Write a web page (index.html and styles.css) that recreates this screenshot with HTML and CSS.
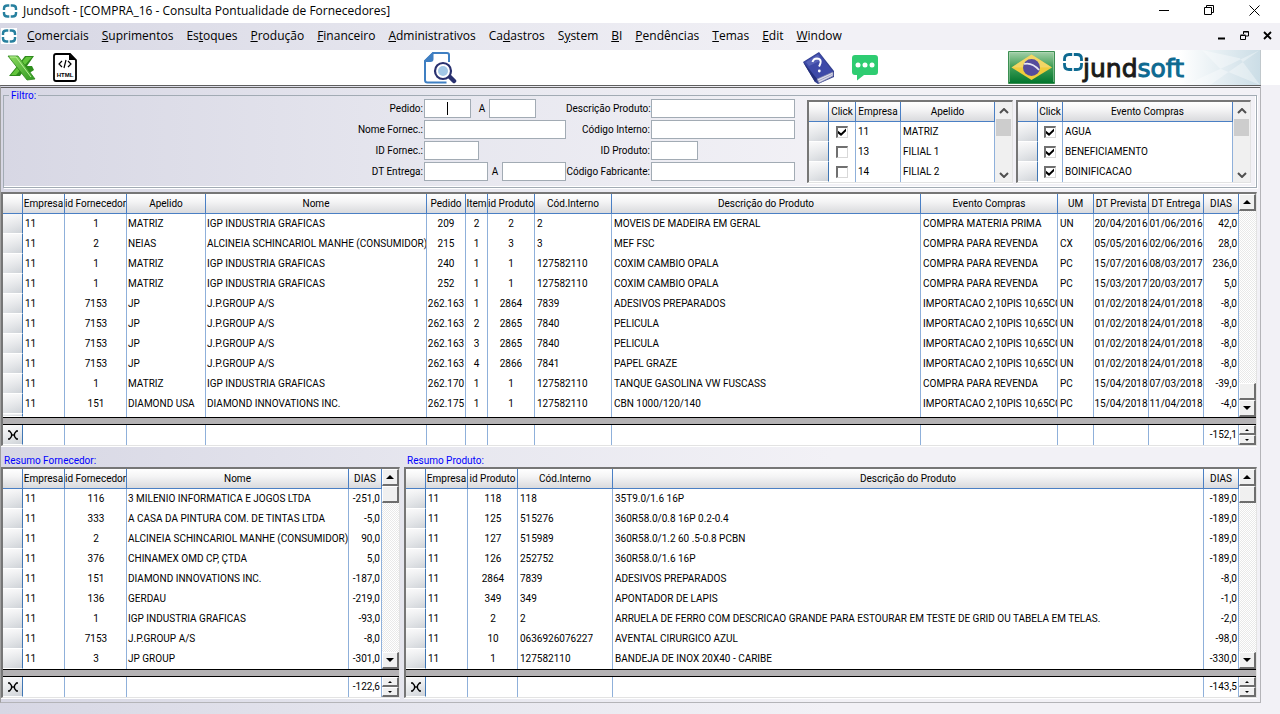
FILE: index.html
```html
<!DOCTYPE html>
<html lang="pt-BR">
<head>
<meta charset="utf-8">
<title>Jundsoft - [COMPRA_16 - Consulta Pontualidade de Fornecedores]</title>
<link rel="stylesheet" href="styles.css">
</head>
<body>
<svg class="defs" aria-hidden="true">
  <symbol id="brand" viewBox="0 0 16 16"><path d="M7.300 2.500H5.500Q2 2.500 2 5.500V7M8.700 2.500h1.800Q14 2.500 14 5.500V7M2 9v1.500q0 3 3.500 3H7.300M14 9v1.500q0 3-3.500 3H8.700" fill="none" stroke="#27809f" stroke-width="2.400"/></symbol>
  <symbol id="up" viewBox="0 0 8 4"><path d="M4 0L8 4H0z"/></symbol>
  <symbol id="down" viewBox="0 0 8 4"><path d="M0 0H8L4 4z"/></symbol>
  <symbol id="chev-up" viewBox="0 0 10 6"><path d="M1 5L5 1L9 5" fill="none" stroke="#505050" stroke-width="2"/></symbol>
  <symbol id="chev-down" viewBox="0 0 10 6"><path d="M1 1L5 5L9 1" fill="none" stroke="#505050" stroke-width="2"/></symbol>
  <symbol id="sum" viewBox="0 0 10 10"><path d="M0 1H1.500L3.500 3.500V6.500L1.500 9H0M10 1H8.500L6.500 3.500V6.500L8.500 9H10M3 5H7" fill="none" stroke="#000" stroke-width="1.300"/></symbol>
</svg>

<header class="titlebar">
  <svg class="brand"><use href="#brand"/></svg>
  <h1>Jundsoft - [COMPRA_16 - Consulta Pontualidade de Fornecedores]</h1>
  <div class="window-buttons">
    <button aria-label="Minimizar"><svg width="11" height="11"><path d="M0 5.500H10" stroke="#000" fill="none"/></svg></button>
    <button aria-label="Restaurar"><svg width="11" height="11"><path d="M.5 2.500h7v7h-7zM2.500 2.500v-2h7v7h-2" stroke="#000" fill="none"/></svg></button>
    <button aria-label="Fechar"><svg width="11" height="11"><path d="M.5.5l10 10M10.500.5l-10 10" stroke="#000" fill="none"/></svg></button>
  </div>
</header>

<nav class="menubar">
  <svg class="brand boxed"><use href="#brand"/></svg>
  <button><u>C</u>omerciais</button><button><u>S</u>uprimentos</button><button>Es<u>t</u>oques</button><button><u>P</u>rodução</button><button><u>F</u>inanceiro</button><button><u>A</u>dministrativos</button><button>Ca<u>d</u>astros</button><button>S<u>y</u>stem</button><button><u>B</u>I</button><button><u>P</u>endências</button><button><u>T</u>emas</button><button><u>E</u>dit</button><button><u>W</u>indow</button>
  <div class="child-buttons">
    <button aria-label="Minimizar janela"><svg width="9" height="9"><path d="M1 7.500H8" stroke="#000" stroke-width="2"/></svg></button>
    <button aria-label="Restaurar janela"><svg width="9" height="9"><path d="M.5 4.500h5v4h-5zM.5 4h5M3.500 3V.5h5v4.500H6M3.500 1h5" stroke="#000" fill="none"/></svg></button>
    <button aria-label="Fechar janela"><svg width="9" height="9"><path d="M1 1l7 7M8 1l-7 7" stroke="#000" stroke-width="1.800"/></svg></button>
  </div>
</nav>

<div class="toolbar">
  <div class="tools start">
    <button aria-label="Exportar Excel"><svg width="30" height="28" viewBox="0 0 30 28">
      <defs><linearGradient id="xl" x1="0" y1="0" x2="1" y2="1"><stop offset="0" stop-color="#8edb62"/><stop offset="1" stop-color="#2f9a20"/></linearGradient></defs>
      <path d="M18 2h9L13 22H2L11 11z" fill="#2f8a1c"/><path d="M19 3h6L9 21H4z" fill="#63c53c"/><path d="M16 12h9l2 4-6 4z" fill="#2f8f1d"/>
      <path d="M1 2h10L28 25l-8 1z" fill="url(#xl)" stroke="#2c8519" stroke-width=".8"/><path d="M3 3h6L24 23" stroke="#baf096" fill="none"/></svg></button>
    <button aria-label="Exportar HTML"><svg width="24" height="29" viewBox="0 0 24 29">
      <path d="M3 1H17L23 7V26q0 2-2 2H3q-2 0-2-2V3q0-2 2-2z" fill="#fff" stroke="#000" stroke-width="1.800"/><path d="M16 1v6h7z"/>
      <path d="M9 8L6 11l3 3M15 8l3 3-3 3M13 7l-2 8" fill="none" stroke="#000" stroke-width="1.200"/>
      <text x="12" y="24" class="html-label">HTML</text></svg></button>
  </div>
  <span class="space wide"></span>
  <button aria-label="Pesquisar"><svg width="34" height="34" viewBox="0 0 34 34">
    <path d="M26 11V4q0-2-2-2H10L2 10V29q0 2.500 2.500 2.500H23.500" fill="none" stroke="#3f7fc2" stroke-width="2"/><path d="M10.500 1V8q0 3-3 3H1V10L10 1z" fill="#3f7fc2"/>
    <path d="M26 25l5 5" stroke="#29316f" stroke-width="4.500" stroke-linecap="round"/><circle cx="20" cy="20" r="8" fill="#fff" stroke="#29316f" stroke-width="2.200"/><circle cx="20" cy="20" r="5" fill="#a3c8e6"/></svg></button>
  <span class="space wide"></span>
  <div class="tools help">
    <button aria-label="Ajuda"><svg width="33" height="34" viewBox="0 0 33 34">
      <path d="M1 11L17 1L32 20V26L16 33L13 31z" fill="#33408f"/><path d="M2 11L17 2L31 21L15 28z" fill="#3e4aa8"/><path d="M4 11L16 3.500L20 9L7 15z" fill="#6975c2" opacity=".6"/>
      <path d="M15 28L31 21V25L17 32z" fill="#dcdcec" stroke="#7b7fa8" stroke-width=".7"/><path d="M16 30L30 23.500" stroke="#8f90b5" stroke-width=".7"/><path d="M1 11L13 31L15 28z" fill="#242f7c"/>
      <path d="M10.500 11q1-3.500 4.500-3.500 4.500.5 3.500 4.500-.8 2.500-1.500 3.500" fill="none" stroke="#fff" stroke-width="2"/><circle cx="17.300" cy="20" r="1.400" fill="#fff"/></svg></button>
    <button aria-label="Mensagens"><svg width="26" height="26" viewBox="0 0 26 26"><path d="M3 0H23q3 0 3 3V17q0 3-3 3H12L5 25.500V20H3q-3 0-3-3V3Q0 0 3 0z" fill="#2ecc71"/><g fill="#fff"><circle cx="6" cy="10" r="2.500"/><circle cx="13" cy="10" r="2.500"/><circle cx="20" cy="10" r="2.500"/></g></svg></button>
  </div>
  <span class="space narrow"></span>
  <button aria-label="Idioma: Português (Brasil)"><svg width="47" height="33" viewBox="0 0 47 33">
    <defs><linearGradient id="fl" x1="0" y1="0" x2="0" y2="1"><stop offset="0" stop-color="#a6d1ab"/><stop offset=".45" stop-color="#45a15a"/><stop offset="1" stop-color="#00742c"/></linearGradient></defs>
    <path d="M.5.5h46v32h-46z" fill="url(#fl)" stroke="#3c8f52"/><path d="M1.500 31V1.500H45.500V31" fill="none" stroke="#b9dcbd" opacity=".5"/><path d="M23.500 3.500L44 16.500L23.500 29L3.500 16.500z" fill="#f0cc3c"/><path d="M23.500 3.500L44 16.500H3.500z" fill="#f3dc80" opacity=".6"/><circle cx="23.500" cy="16.500" r="8.500" fill="#554c9c"/><path d="M16 13q8-2 15 6" stroke="#e8e8f4" stroke-width="1.600" fill="none"/></svg></button>
  <div class="banner">
    <svg width="20" height="18" viewBox="0 0 20 18"><path d="M9.200 1.500H6Q1.500 1.500 1.500 6V8M10.800 1.500H14Q18.500 1.500 18.500 6V8M1.500 10v2q0 4.500 4.500 4.500H9.200M18.500 10v2q0 4.500-4.500 4.500H10.800" fill="none" stroke="#0e6a91" stroke-width="2.800"/></svg>
    <span class="wordmark">jund<b>soft</b></span>
    <svg class="facets" viewBox="0 0 80 34" preserveAspectRatio="none"><defs><linearGradient id="bn"><stop offset="0" stop-color="#fff"/><stop offset="1" stop-color="#cbdde6"/></linearGradient></defs><path d="M0 0h80v34H0z" fill="url(#bn)"/><path d="M80 0L30 34H5L50 14zM22 0L40 18 80 34 60 8z" fill="#fff" opacity=".35"/></svg>
  </div>
</div>

<main class="panel">
  <fieldset class="filter">
    <legend>Filtro:</legend>
    <div class="filter-body">
      <div class="form">
        <div class="line"><label for="pedido">Pedido:</label><input id="pedido" class="w47 current"><label class="to" for="pedido-a">A</label><input id="pedido-a" class="w47"></div>
        <div class="line"><label for="nome">Nome Fornec.:</label><input id="nome" class="grow"></div>
        <div class="line"><label for="idf">ID Fornec.:</label><input id="idf" class="w55"></div>
        <div class="line"><label for="dt">DT Entrega:</label><input id="dt" class="w64"><label class="to tight" for="dt-a">A</label><input id="dt-a" class="w64"></div>
      </div>
      <div class="form second">
        <div class="line"><label for="desc">Descrição Produto:</label><input id="desc" class="grow"></div>
        <div class="line"><label for="cod">Código Interno:</label><input id="cod" class="grow"></div>
        <div class="line"><label for="idp">ID Produto:</label><input id="idp" class="w47"></div>
        <div class="line"><label for="fab">Código Fabricante:</label><input id="fab" class="grow"></div>
      </div>
      <div class="frame pick companies">
        <table class="data">
          <colgroup><col class="c20"><col class="c27"><col class="c45"><col></colgroup>
          <thead><tr><th><th>Click<th>Empresa<th>Apelido</thead>
          <tbody>
          <tr><td><td class="mid"><input type="checkbox" aria-label="MATRIZ" checked><td>11<td>MATRIZ
          <tr><td><td class="mid"><input type="checkbox" aria-label="FILIAL 1"><td>13<td>FILIAL 1
          <tr><td><td class="mid"><input type="checkbox" aria-label="FILIAL 2"><td>14<td>FILIAL 2
          </tbody>
        </table>
        <div class="flatbar"><svg><use href="#chev-up"/></svg><i></i><svg><use href="#chev-down"/></svg></div>
      </div>
      <div class="frame pick events">
        <table class="data">
          <colgroup><col class="c20"><col class="c25"><col></colgroup>
          <thead><tr><th><th>Click<th>Evento Compras</thead>
          <tbody>
          <tr><td><td class="mid"><input type="checkbox" aria-label="AGUA" checked><td>AGUA
          <tr><td><td class="mid"><input type="checkbox" aria-label="BENEFICIAMENTO" checked><td>BENEFICIAMENTO
          <tr><td><td class="mid"><input type="checkbox" aria-label="BOINIFICACAO" checked><td>BOINIFICACAO
          </tbody>
        </table>
        <div class="flatbar"><svg><use href="#chev-up"/></svg><i></i><svg><use href="#chev-down"/></svg></div>
      </div>
    </div>
  </fieldset>

  <section class="frame">
    <div class="rows">
      <table class="data orders">
        <colgroup><col class="c20"><col class="c42"><col class="c62"><col class="c79"><col class="c221"><col class="c39"><col class="c22"><col class="c47"><col class="c77"><col><col class="c137"><col class="c36"><col class="c55"><col class="c55"><col class="c35"></colgroup>
        <thead><tr><th><th>Empresa<th>id Fornecedor<th>Apelido<th>Nome<th>Pedido<th>Item<th>id Produto<th>Cód.Interno<th>Descrição do Produto<th>Evento Compras<th>UM<th>DT Prevista<th>DT Entrega<th>DIAS</thead>
        <tbody>
        <tr><td><td>11<td>1<td>MATRIZ<td>IGP INDUSTRIA GRAFICAS<td>209<td>2<td>2<td>2<td>MOVEIS DE MADEIRA EM GERAL<td>COMPRA MATERIA PRIMA<td>UN<td>20/04/2016<td>01/06/2016<td>42,0
        <tr><td><td>11<td>2<td>NEIAS<td>ALCINEIA SCHINCARIOL MANHE (CONSUMIDOR)<td>215<td>1<td>3<td>3<td>MEF FSC<td>COMPRA PARA REVENDA<td>CX<td>05/05/2016<td>02/06/2016<td>28,0
        <tr><td><td>11<td>1<td>MATRIZ<td>IGP INDUSTRIA GRAFICAS<td>240<td>1<td>1<td>127582110<td>COXIM CAMBIO OPALA<td>COMPRA PARA REVENDA<td>PC<td>15/07/2016<td>08/03/2017<td>236,0
        <tr><td><td>11<td>1<td>MATRIZ<td>IGP INDUSTRIA GRAFICAS<td>252<td>1<td>1<td>127582110<td>COXIM CAMBIO OPALA<td>COMPRA PARA REVENDA<td>PC<td>15/03/2017<td>20/03/2017<td>5,0
        <tr><td><td>11<td>7153<td>JP<td>J.P.GROUP A/S<td>262.163<td>1<td>2864<td>7839<td>ADESIVOS PREPARADOS<td>IMPORTACAO 2,10PIS 10,65CO<td>UN<td>01/02/2018<td>24/01/2018<td>-8,0
        <tr><td><td>11<td>7153<td>JP<td>J.P.GROUP A/S<td>262.163<td>2<td>2865<td>7840<td>PELICULA<td>IMPORTACAO 2,10PIS 10,65CO<td>UN<td>01/02/2018<td>24/01/2018<td>-8,0
        <tr><td><td>11<td>7153<td>JP<td>J.P.GROUP A/S<td>262.163<td>3<td>2865<td>7840<td>PELICULA<td>IMPORTACAO 2,10PIS 10,65CO<td>UN<td>01/02/2018<td>24/01/2018<td>-8,0
        <tr><td><td>11<td>7153<td>JP<td>J.P.GROUP A/S<td>262.163<td>4<td>2866<td>7841<td>PAPEL GRAZE<td>IMPORTACAO 2,10PIS 10,65CO<td>UN<td>01/02/2018<td>24/01/2018<td>-8,0
        <tr><td><td>11<td>1<td>MATRIZ<td>IGP INDUSTRIA GRAFICAS<td>262.170<td>1<td>1<td>127582110<td>TANQUE GASOLINA VW FUSCASS<td>COMPRA PARA REVENDA<td>PC<td>15/04/2018<td>07/03/2018<td>-39,0
        <tr><td><td>11<td>151<td>DIAMOND USA<td>DIAMOND INNOVATIONS INC.<td>262.175<td>1<td>1<td>127582110<td>CBN 1000/120/140<td>IMPORTACAO 2,10PIS 10,65CO<td>PC<td>15/04/2018<td>11/04/2018<td>-4,0
        <tr class="filler"><td><td><td><td><td><td><td><td><td><td><td><td><td><td><td>
        </tbody>
      </table>
      <div class="scroll at-end"><button aria-label="Subir"><svg><use href="#up"/></svg></button><i></i><button aria-label="Descer"><svg><use href="#down"/></svg></button></div>
    </div>
    <div class="split"></div>
    <div class="rows">
      <table class="data totals">
        <colgroup><col class="c20"><col class="c42"><col class="c62"><col class="c79"><col class="c221"><col class="c39"><col class="c22"><col class="c47"><col class="c77"><col><col class="c137"><col class="c36"><col class="c55"><col class="c55"><col class="c35"></colgroup>
        <tbody><tr><td><svg class="sum"><use href="#sum"/></svg><td><td><td><td><td><td><td><td><td><td><td><td><td><td>-152,1</tbody>
      </table>
      <div class="spin"><button aria-label="Anterior"><svg><use href="#up"/></svg></button><button aria-label="Próximo"><svg><use href="#down"/></svg></button></div>
    </div>
  </section>

  <div class="summaries">
    <section>
      <h2>Resumo Fornecedor:</h2>
      <div class="frame">
        <div class="rows">
          <table class="data suppliers">
            <colgroup><col class="c20"><col class="c42"><col class="c62"><col><col class="c33"></colgroup>
            <thead><tr><th><th>Empresa<th>id Fornecedor<th>Nome<th>DIAS</thead>
            <tbody>
            <tr><td><td>11<td>116<td>3 MILENIO INFORMATICA E JOGOS LTDA<td>-251,0
            <tr><td><td>11<td>333<td>A CASA DA PINTURA COM. DE TINTAS LTDA<td>-5,0
            <tr><td><td>11<td>2<td>ALCINEIA SCHINCARIOL MANHE (CONSUMIDOR)<td>90,0
            <tr><td><td>11<td>376<td>CHINAMEX OMD CP, ÇTDA<td>5,0
            <tr><td><td>11<td>151<td>DIAMOND INNOVATIONS INC.<td>-187,0
            <tr><td><td>11<td>136<td>GERDAU<td>-219,0
            <tr><td><td>11<td>1<td>IGP INDUSTRIA GRAFICAS<td>-93,0
            <tr><td><td>11<td>7153<td>J.P.GROUP A/S<td>-8,0
            <tr><td><td>11<td>3<td>JP GROUP<td>-301,0
            </tbody>
          </table>
          <div class="scroll"><button aria-label="Subir"><svg><use href="#up"/></svg></button><i></i><button aria-label="Descer"><svg><use href="#down"/></svg></button></div>
        </div>
        <div class="split"></div>
        <div class="rows">
          <table class="data totals">
            <colgroup><col class="c20"><col class="c42"><col class="c62"><col><col class="c33"></colgroup>
            <tbody><tr><td><svg class="sum"><use href="#sum"/></svg><td><td><td><td>-122,6</tbody>
          </table>
          <div class="spin"><button aria-label="Anterior"><svg><use href="#up"/></svg></button><button aria-label="Próximo"><svg><use href="#down"/></svg></button></div>
        </div>
      </div>
    </section>
    <section>
      <h2>Resumo Produto:</h2>
      <div class="frame">
        <div class="rows">
          <table class="data products">
            <colgroup><col class="c20"><col class="c42"><col class="c50"><col class="c95"><col><col class="c35"></colgroup>
            <thead><tr><th><th>Empresa<th>id Produto<th>Cód.Interno<th>Descrição do Produto<th>DIAS</thead>
            <tbody>
            <tr><td><td>11<td>118<td>118<td>35T9.0/1.6 16P<td>-189,0
            <tr><td><td>11<td>125<td>515276<td>360R58.0/0.8 16P 0.2-0.4<td>-189,0
            <tr><td><td>11<td>127<td>515989<td>360R58.0/1.2 60 .5-0.8 PCBN<td>-189,0
            <tr><td><td>11<td>126<td>252752<td>360R58.0/1.6 16P<td>-189,0
            <tr><td><td>11<td>2864<td>7839<td>ADESIVOS PREPARADOS<td>-8,0
            <tr><td><td>11<td>349<td>349<td>APONTADOR DE LAPIS<td>-1,0
            <tr><td><td>11<td>2<td>2<td>ARRUELA DE FERRO COM DESCRICAO GRANDE PARA ESTOURAR EM TESTE DE GRID OU TABELA EM TELAS.<td>-2,0
            <tr><td><td>11<td>10<td>0636926076227<td>AVENTAL CIRURGICO AZUL<td>-98,0
            <tr><td><td>11<td>1<td>127582110<td>BANDEJA DE INOX 20X40 - CARIBE<td>-330,0
            </tbody>
          </table>
          <div class="scroll"><button aria-label="Subir"><svg><use href="#up"/></svg></button><i></i><button aria-label="Descer"><svg><use href="#down"/></svg></button></div>
        </div>
        <div class="split"></div>
        <div class="rows">
          <table class="data totals">
            <colgroup><col class="c20"><col class="c42"><col class="c50"><col class="c95"><col><col class="c35"></colgroup>
            <tbody><tr><td><svg class="sum"><use href="#sum"/></svg><td><td><td><td><td>-143,5</tbody>
          </table>
          <div class="spin"><button aria-label="Anterior"><svg><use href="#up"/></svg></button><button aria-label="Próximo"><svg><use href="#down"/></svg></button></div>
        </div>
      </div>
    </section>
  </div>
</main>
</body>
</html>
```

FILE: styles.css
```css
* { box-sizing: border-box; }
body {
  margin: 0;
  min-height: 100vh;
  color: #000;
  font: 10px/20px Roboto, "Liberation Sans", sans-serif;
  background: linear-gradient(90deg, #d7d7e4 0, #e7e7ef 35%, #f2f1f6 65%);
}
button { margin: 0; padding: 0; border: 0; background: none; font: inherit; color: inherit; }
svg { display: block; flex: none; }
.defs { position: absolute; width: 0; height: 0; }

.titlebar { display: flex; align-items: center; height: 23px; padding: 0 20px 2px 2px; background: #fff; }
.titlebar h1 { flex: 1; margin: 0 0 0 5px; font: 12px/20px "Open Sans", "Noto Sans", sans-serif; }
.brand { width: 16px; height: 16px; }
.brand.boxed { background: #fff; margin-right: -3px; }
.window-buttons { display: flex; gap: 34px; }

.menubar { display: flex; align-items: center; height: 27px; padding: 0 8px 2px 1px; gap: 13px; font: 12px/20px "Open Sans", "Noto Sans", sans-serif; }
.child-buttons { display: flex; gap: 14px; margin-left: auto; }

.toolbar { display: flex; align-items: center; height: 35px; padding-right: 19px; background: #fff; }
.tools { display: flex; align-items: center; }
.start { gap: 16px; padding-left: 7px; }
.help { gap: 17px; }
.space.wide { flex: 8; }
.space.narrow { flex: 3; }
.html-label { font: bold 6px "Liberation Sans", sans-serif; text-anchor: middle; }
.banner { display: flex; height: 35px; width: 206px; padding: 3px 0 0 8px; border-right: 1px solid #c0c8cc; position: relative; }
.wordmark { position: relative; z-index: 1; font: 25px/32px "DejaVu Sans", sans-serif; color: #1b1b1b; -webkit-text-stroke: 1px currentColor; }
.wordmark b { font-weight: normal; color: #0e6a91; }
.facets { position: absolute; right: 0; top: 0; width: 80px; height: 35px; }

.panel { margin-right: 19px; padding: 1px 3px 4px 0; border: 1px solid #b4b4b8; border-left-color: #a0a0a0; border-top: 3px double #5f5f5f; }

.filter { margin: 0 0 4px 2px; padding: 0; border: 1px solid #a2abb4; min-width: 0; box-shadow: inset -1px -1px #fff, 1px 1px #fff; }
.filter legend { height: 13px; margin-left: 5px; padding: 0 2px; line-height: 13px; color: #00f; }
.filter-body { display: flex; justify-content: flex-end; padding: 0 5px 4px 0; margin-top: -3px; }
.form { display: flex; flex-direction: column; gap: 2px; width: 223px; }
.form.second { width: 229px; margin-right: 12px; }
.line { display: flex; align-items: center; height: 19px; }
.line label { width: 81px; padding-right: 1px; text-align: right; white-space: nowrap; }
.second .line label { width: 85px; }
.line .to { width: 18px; padding: 0; text-align: center; padding-left: 4px; }
.line .to.tight { width: 14px; padding: 0; }
.line input { height: 19px; min-width: 0; padding: 0 2px; border: 1px solid #a2abb4; background: #fff; font: inherit; outline: 0; }
.w47 { width: 47px; }
.w55 { width: 55px; }
.w64 { width: 64px; }
.grow { flex: 1; }
.line .current { text-align: center; caret-color: transparent; background: linear-gradient(#000, #000) center / 1px 13px no-repeat #fff; }

.frame { background: #fff; border: 2px solid #767676; border-right: 1px solid #e3e3e3; border-bottom: 1px solid #e3e3e3; box-shadow: 0 1px #fff; }
.pick { display: flex; height: 83px; overflow: hidden; margin-top: 1px; }
.companies { width: 206px; margin-right: 3px; }
.events { width: 235px; }
.rows { display: flex; align-items: stretch; }

.data { flex: 1; width: 0; table-layout: fixed; border-collapse: separate; border-spacing: 0; align-self: flex-start; }
.data th, .data td { height: 20px; padding: 0 0 0 1px; line-height: 20px; font-weight: normal; text-align: left; white-space: nowrap; overflow: hidden; border-right: 1px solid #8fb0da; }
.data th { padding: 0; line-height: 19px; text-align: center; border-right-color: #4a7fc4; border-bottom: 1px solid #4a7fc4; background: linear-gradient(#fff, #f4f4f5 40%, #d9dadd); }
.data td:last-child { padding-right: 1px; }
.data td:first-child { padding: 0; line-height: 19px; border-right-color: #3f76b4; border-bottom: 1px solid #fff; background: linear-gradient(100deg, #fff6, #fff0), linear-gradient(#f6f6f7, #ced2d7); }
.data .filler td { height: 3px; line-height: 0; }
.data .mid { padding: 0; text-align: center; }
.data td:nth-child(3) { text-align: center; }
.pick .data td:nth-child(3) { text-align: left; }
.data td:nth-child(2), .pick .data td, .products td:nth-child(n+4) { padding-left: 2px; }
.orders td:nth-child(n+9) { padding-left: 2px; }
.orders td:nth-child(6), .orders td:nth-child(7), .orders td:nth-child(8) { text-align: center; padding: 0; }
.orders td:nth-child(13), .orders td:nth-child(14) { text-align: center; padding: 0; }
.orders td:last-child, .suppliers td:last-child, .products td:last-child, .totals td:last-child { text-align: right; }
.pick .data td:first-child, .pick .data .mid { padding: 0; }
.c20 { width: 20px; } .c22 { width: 22px; } .c25 { width: 25px; } .c27 { width: 27px; }
.c33 { width: 33px; } .c35 { width: 35px; } .c36 { width: 36px; } .c39 { width: 39px; }
.c42 { width: 42px; } .c45 { width: 45px; } .c47 { width: 47px; } .c50 { width: 50px; }
.c55 { width: 55px; } .c62 { width: 62px; } .c77 { width: 77px; } .c79 { width: 79px; }
.c95 { width: 95px; } .c137 { width: 137px; } .c221 { width: 221px; }
.sum { width: 10px; height: 10px; margin: auto; }

input[type="checkbox"] { appearance: none; display: block; width: 12px; height: 12px; margin: 0 auto; border: 1px solid #d8d8d8; border-top: 2px solid #707070; border-left: 2px solid #707070; background: #fff; }
input[type="checkbox"]:checked::after { content: ""; display: block; width: 8px; height: 8px; background: #000; clip-path: polygon(0 35%, 38% 65%, 100% 5%, 100% 42%, 38% 100%, 0 70%); }

.split { height: 8px; border: solid #000; border-width: 1px 0; background: #b4b2b4; }

.scroll { display: flex; flex-direction: column; width: 17px; background: repeating-conic-gradient(#e9e9e9 0 25%, #fff 0 50%) 0 0 / 2px 2px; }
.scroll button, .scroll i, .spin button { display: flex; align-items: center; justify-content: center; height: 17px; background: #f0f0f0; border: 1px solid #fff; border-right: 2px solid #6e6e6e; border-bottom: 2px solid #6e6e6e; }
.scroll svg { width: 8px; height: 4px; }
.scroll button:last-child { margin-top: auto; }
.scroll.at-end i { margin-top: auto; }
.scroll.at-end button:last-child { margin-top: 0; }
.spin { width: 17px; }
.spin button { width: 17px; height: 10px; }
.spin svg { width: 4px; height: 2px; }

.flatbar { display: flex; flex-direction: column; align-items: center; width: 17px; padding: 6px 0 4px; background: #f0f0f0; }
.flatbar svg { width: 10px; height: 6px; }
.flatbar i { width: 15px; height: 17px; margin: 5px 0 auto; background: #cdcdcd; }

.summaries { display: grid; grid-template-columns: 399fr 853fr; column-gap: 4px; padding-top: 1px; }
.summaries h2 { height: 20px; margin: 0; padding: 6px 0 0 3px; font: inherit; line-height: 16px; color: #00f; }
```
